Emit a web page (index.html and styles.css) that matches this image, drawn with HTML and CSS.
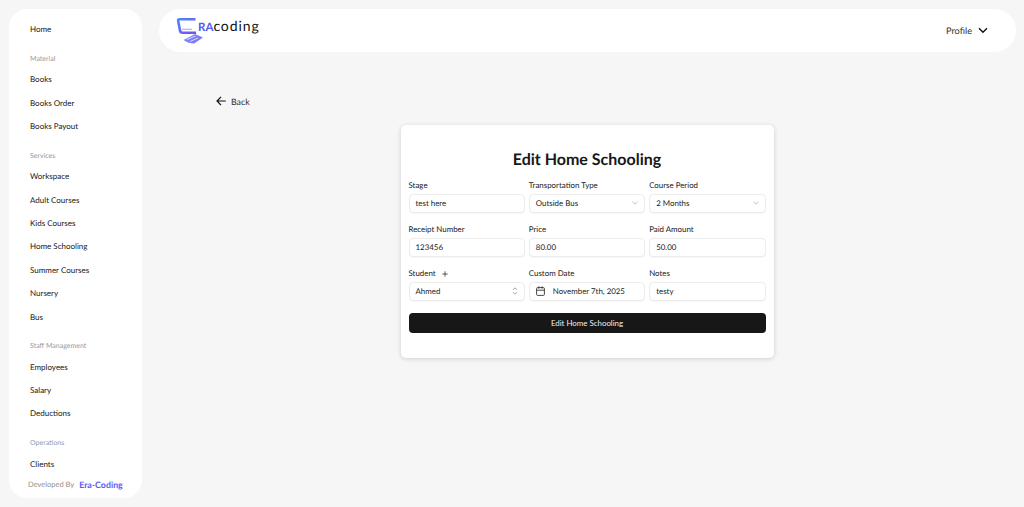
FILE: index.html
```html
<!DOCTYPE html>
<html lang="en">
<head>
<meta charset="utf-8">
<title>Edit Home Schooling</title>
<link rel="stylesheet" href="styles.css">
</head>
<body>
<div class="shell">
  <aside class="sidebar">
    <nav class="nav">
      <a class="item">Home</a>
      <div class="section">Material</div>
      <a class="item">Books</a>
      <a class="item">Books Order</a>
      <a class="item">Books Payout</a>
      <div class="section">Services</div>
      <a class="item">Workspace</a>
      <a class="item">Adult Courses</a>
      <a class="item">Kids Courses</a>
      <a class="item">Home Schooling</a>
      <a class="item">Summer Courses</a>
      <a class="item">Nursery</a>
      <a class="item">Bus</a>
      <div class="section">Staff Management</div>
      <a class="item">Employees</a>
      <a class="item">Salary</a>
      <a class="item">Deductions</a>
      <div class="section">Operations</div>
      <a class="item">Clients</a>
    </nav>
    <div class="credit"><span class="credit-by">Developed By</span><span class="credit-name">Era-Coding</span></div>
  </aside>
  <div class="main">
    <header class="topbar">
      <div class="logo">
        <svg class="logo-mark" width="20" height="27" viewBox="0 0 20 27" fill="none">
          <defs>
            <linearGradient id="lg" x1="0" y1="0" x2="1" y2="1">
              <stop offset="0" stop-color="#4f86fb"/>
              <stop offset="1" stop-color="#7a4df0"/>
            </linearGradient>
          </defs>
          <path d="M18.500 2.200H2.500C1.300 2.200 1 3 1.200 4L3 13.500C3.300 15 4.200 15.700 5.500 15.700H19" stroke="url(#lg)" stroke-width="2.600"/>
          <path d="M3 8.500H17.500" stroke="url(#lg)" stroke-width="2.800"/>
          <path d="M5 12.300H15" stroke="#a9b3fb" stroke-width="1.200"/>
          <path d="M18 17L26 20.500L17 26.500C14 26.500 9.500 25.500 6.500 23Z" fill="url(#lg)" opacity=".85"/>
          <path d="M10 22.500L18.500 19M13 24.500L21 21" stroke="#fff" stroke-width=".7"/>
        </svg>
        <span class="logo-ra">RA</span><span class="logo-coding">coding</span>
      </div>
      <div class="profile">
        <span>Profile</span>
        <svg width="10" height="7" viewBox="0 0 10 7" fill="none"><path d="M1 1.200L5 5.200L9 1.200" stroke="#111" stroke-width="1.400"/></svg>
      </div>
    </header>
    <main class="content">
      <a class="back">
        <svg width="10" height="10" viewBox="0 0 10 10" fill="none"><path d="M5 .8L1 5L5 9.200M1 5H9.800" stroke="#111" stroke-width="1.200"/></svg>
        <span>Back</span>
      </a>
      <section class="card">
        <h1 class="title">Edit Home Schooling</h1>
        <form class="grid">
          <div class="field"><label class="label">Stage</label><div class="control">test here</div></div>
          <div class="field"><label class="label">Transportation Type</label><div class="control spread">Outside Bus
            <svg class="chev" width="6" height="4" viewBox="0 0 6 4" fill="none"><path d="M.5 .8L3 3.200L5.500 .8" stroke="#b0b0b0" stroke-width=".8"/></svg></div></div>
          <div class="field"><label class="label">Course Period</label><div class="control spread">2 Months
            <svg class="chev" width="6" height="4" viewBox="0 0 6 4" fill="none"><path d="M.5 .8L3 3.200L5.500 .8" stroke="#b0b0b0" stroke-width=".8"/></svg></div></div>
          <div class="field"><label class="label">Receipt Number</label><div class="control">123456</div></div>
          <div class="field"><label class="label">Price</label><div class="control">80.00</div></div>
          <div class="field"><label class="label">Paid Amount</label><div class="control">50.00</div></div>
          <div class="field"><label class="label label-add">Student
            <svg width="6" height="6" viewBox="0 0 6 6" fill="none"><path d="M3 .3V5.700M.3 3H5.700" stroke="#333" stroke-width=".8"/></svg></label>
            <div class="control spread">Ahmed
            <svg class="updown" width="6" height="8" viewBox="0 0 6 8" fill="none"><path d="M1 2.800L3 .8L5 2.800M1 5.200L3 7.200L5 5.200" stroke="#8a8a8a" stroke-width=".8"/></svg></div></div>
          <div class="field"><label class="label">Custom Date</label><div class="control date">
            <svg width="9" height="10" viewBox="0 0 9 10" fill="none"><rect x=".6" y="1.600" width="7.800" height="7.800" rx="1" stroke="#333" stroke-width=".9"/><path d="M.6 4.200H8.400M2.800 .3V2.600M6.200 .3V2.600" stroke="#333" stroke-width=".9"/></svg>
            <span>November 7th, 2025</span></div></div>
          <div class="field"><label class="label">Notes</label><div class="control">testy</div></div>
          <button class="submit" type="button">Edit Home Schooling</button>
        </form>
      </section>
    </main>
  </div>
</div>
</body>
</html>
```
FILE: styles.css
```css
* { box-sizing: border-box; }
html, body { height: 100%; }
body {
  margin: 0;
  background: #f6f6f6;
  color: #171717;
  font-family: "Lato", "Noto Sans", sans-serif;
  text-rendering: geometricPrecision;
  overflow: hidden;
}
.shell { display: flex; height: 507px; padding: 9px 8px 9px 9px; gap: 17px; }
.sidebar {
  width: 133px;
  flex: none;
  height: 489px;
  background: #fff;
  border-radius: 18px;
  padding: 9px 0 0 21px;
  display: flex;
  flex-direction: column;
  overflow: hidden;
}
.nav { flex: 1; min-height: 0; display: flex; flex-direction: column; }
.item {
  flex: none;
  height: 23.4px;
  line-height: 23.4px;
  font-size: 8px;
  font-weight: 400;
  color: #171717;
}
.section {
  flex: none;
  height: 14px;
  line-height: 14px;
  margin: 10.300px 0 2.500px;
  font-size: 7px;
  font-weight: 400;
  color: #9199a8;
}
.credit { flex: none; height: 22px; margin-left: -2px; display: flex; align-items: center; gap: 5px; padding-bottom: 6px; white-space: nowrap; }
.credit-by { font-size: 7.500px; color: #8f8f8f; }
.credit-name { font-size: 8.800px; font-weight: 700; color: #5b5bf6; }
.main { flex: 1; min-width: 0; display: flex; flex-direction: column; }
.topbar {
  height: 43px;
  flex: none;
  background: #fff;
  border-radius: 22px;
  padding: 0 28px 0 18px;
  display: flex;
  justify-content: space-between;
  align-items: center;
}
.logo { display: flex; align-items: flex-start; align-self: flex-start; padding-top: 8px; }
.logo-mark { overflow: visible; flex: none; }
.logo-ra { font-size: 11.500px; font-weight: 700; color: #4f5bf6; line-height: 12px; margin: 5px 0 0 1px; }
.logo-coding { font-size: 14px; letter-spacing: .9px; color: #111; line-height: 14px; margin: 1.500px 0 0 0; }
.profile { display: flex; align-items: center; gap: 6px; font-size: 9.200px; color: #333; }
.content { flex: 1; min-height: 0; display: flex; flex-direction: column; align-items: center; padding-top: 42px; }
.back { align-self: flex-start; margin-left: 57px; display: flex; align-items: center; gap: 5px; height: 14px; font-size: 8.800px; color: #333; }
.card {
  width: 373px;
  height: 233px;
  margin-top: 17px;
  margin-left: -1px;
  background: #fff;
  border-radius: 5px;
  box-shadow: 0 1px 5px rgba(0,0,0,.16);
  padding: 24px 8px 0;
}
.title { margin: 0 0 8px; font-size: 16px; line-height: 22px; font-weight: 700; text-align: center; color: #171717; }
.grid { display: grid; grid-template-columns: repeat(3, 1fr); gap: 10.500px 4px; }
.field { display: flex; flex-direction: column; gap: 1.500px; }
.label { height: 13px; line-height: 13px; font-size: 7.900px; font-weight: 400; color: #171717; }
.label-add { display: flex; align-items: center; gap: 6px; }
.control {
  height: 19px;
  border: 1px solid #ececec;
  border-radius: 4px;
  background: #fff;
  box-shadow: 0 1px 1px rgba(0,0,0,.03);
  padding: 0 6px;
  font-size: 7.900px;
  line-height: 17px;
  color: #222;
  white-space: nowrap;
}
.spread { display: flex; align-items: center; justify-content: space-between; }
.date { display: flex; align-items: center; gap: 8px; }
.submit {
  grid-column: 1 / -1;
  height: 19.500px;
  margin-top: 2px;
  border: 0;
  border-radius: 4px;
  background: #171717;
  color: #f0f0f0;
  font-family: inherit;
  font-size: 7.900px;
  font-weight: 400;
}
```
